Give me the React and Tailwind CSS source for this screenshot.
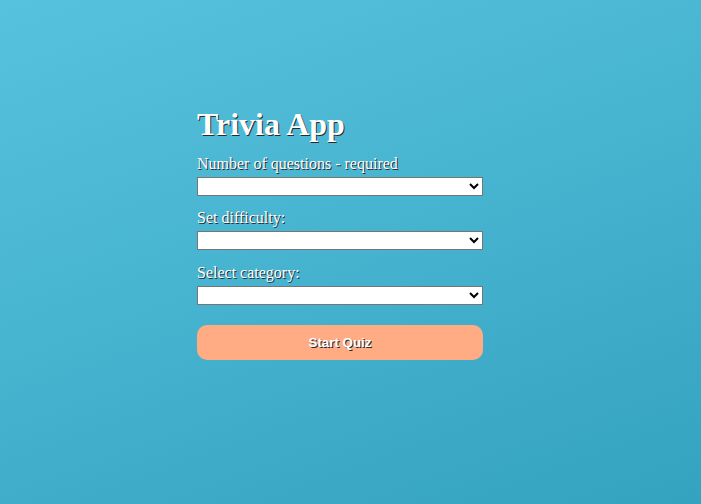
import React, { useState } from "react";

const App = () => {
  const [form, setForm] = useState({
    amount: "",
    difficulty: "",
    category: "",
  });

  const labelClass =
    "block text-[16px] leading-[18px] text-white [text-shadow:1px_1px_0_#2a2a2a]";
  const selectClass =
    "mt-[4px] block h-[19px] w-[286px] border border-[#767676] bg-white text-[13px] text-black";

  return (
    <div className="min-h-[504px] w-full bg-[linear-gradient(160deg,#57c2de_0%,#34a3c0_100%)] pl-[197px] pt-[106px] font-['Liberation_Serif',serif]">
      <form className="flex w-[286px] flex-col" onSubmit={(e) => e.preventDefault()}>
        <h1 className="text-[32px] font-bold leading-[37px] text-white [text-shadow:1px_1px_0_#2a2a2a]">
          Trivia App
        </h1>

        <label className={`mt-[12px] ${labelClass}`}>Number of questions - required</label>
        <select
          className={selectClass}
          value={form.amount}
          onChange={(e) => setForm({ ...form, amount: e.target.value })}
        >
          <option value=""></option>
          <option value="5">5</option>
          <option value="10">10</option>
          <option value="15">15</option>
        </select>

        <label className={`mt-[13px] ${labelClass}`}>Set difficulty:</label>
        <select
          className={selectClass}
          value={form.difficulty}
          onChange={(e) => setForm({ ...form, difficulty: e.target.value })}
        >
          <option value=""></option>
          <option value="easy">Easy</option>
          <option value="medium">Medium</option>
          <option value="hard">Hard</option>
        </select>

        <label className={`mt-[14px] ${labelClass}`}>Select category:</label>
        <select
          className={selectClass}
          value={form.category}
          onChange={(e) => setForm({ ...form, category: e.target.value })}
        >
          <option value=""></option>
          <option value="9">General Knowledge</option>
          <option value="17">Science &amp; Nature</option>
        </select>

        <button
          type="submit"
          className="mt-[20px] h-[35px] w-[286px] rounded-[10px] bg-[#ffab84] font-['Liberation_Sans',Arial,sans-serif] text-[13.33px] font-bold text-white [text-shadow:1px_1px_0_#2a2a2a]"
        >
          Start Quiz
        </button>
      </form>
    </div>
  );
};

export default App;
